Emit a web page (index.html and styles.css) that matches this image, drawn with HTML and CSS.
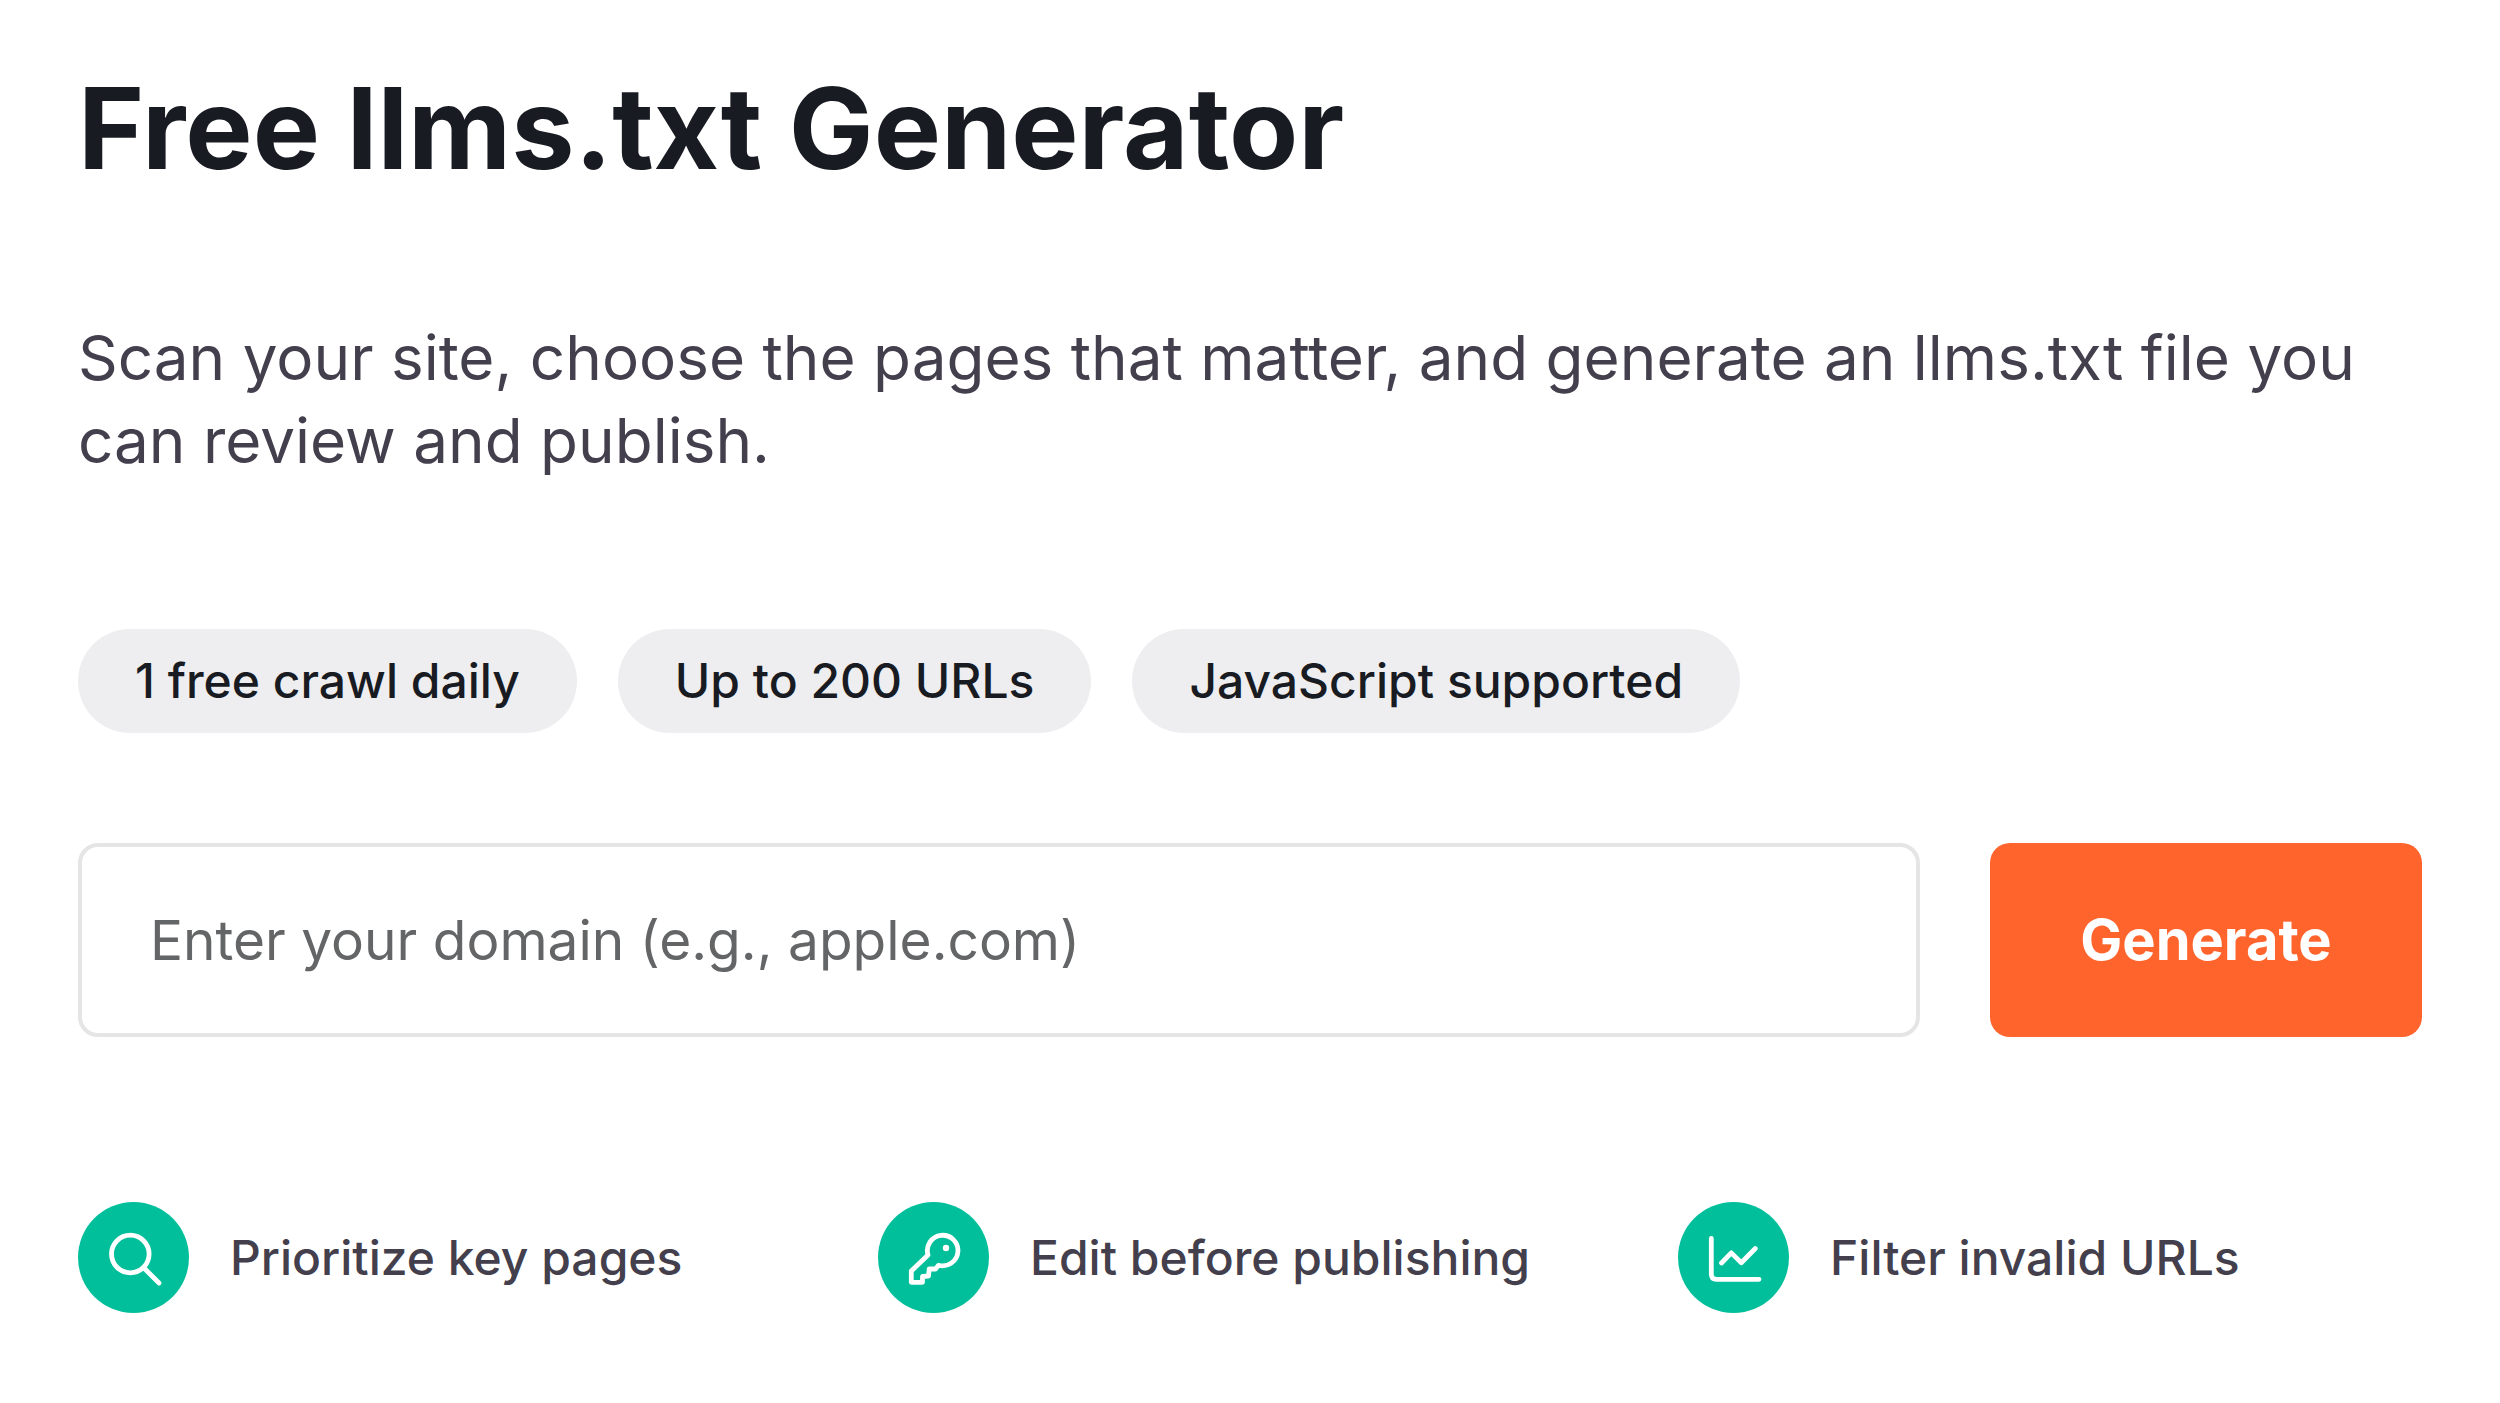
FILE: index.html
```html
<!DOCTYPE html>
<html lang="en">
<head>
<meta charset="utf-8">
<meta name="viewport" content="width=device-width, initial-scale=1">
<title>Free llms.txt Generator</title>
<link rel="stylesheet" href="styles.css">
</head>
<body>
<main class="hero">
  <h1 class="title">Free llms.txt Generator</h1>
  <p class="lead">Scan your site, choose the pages that matter, and generate an llms.txt file you can review and publish.</p>
  <ul class="tags">
    <li class="tag">1 free crawl daily</li>
    <li class="tag">Up to 200 URLs</li>
    <li class="tag">JavaScript supported</li>
  </ul>
  <form class="form">
    <input class="domain" type="text" aria-label="Domain" placeholder="Enter your domain (e.g., apple.com)">
    <button class="submit" type="submit">Generate</button>
  </form>
  <ul class="features">
    <li class="feature">
      <svg class="icon" viewBox="0 0 111 111" aria-hidden="true"><circle class="disc" cx="55.5" cy="55.5" r="55.5"/><circle cx="52.3" cy="52" r="18.8"/><path d="M66.5 66.5 81 81"/></svg>
      <span>Prioritize key pages</span>
    </li>
    <li class="feature">
      <svg class="icon" viewBox="0 0 111 111" aria-hidden="true"><circle class="disc" cx="55.5" cy="55.5" r="55.5"/><path d="M50 53A15.3 15.3 0 1 1 60.5 63.3L57.5 67H51.2L50.5 74 44.5 74.5V80.3H33.3V69Z"/><circle class="dot" cx="68" cy="46" r="3.2"/></svg>
      <span>Edit before publishing</span>
    </li>
    <li class="feature">
      <svg class="icon" viewBox="0 0 111 111" aria-hidden="true"><circle class="disc" cx="55.5" cy="55.5" r="55.5"/><path d="M33.3 36.5V72Q33.3 77.3 38.5 77.3H81M43.5 61 53.3 50.9 63.3 60.7 77.3 46.5"/></svg>
      <span>Filter invalid URLs</span>
    </li>
  </ul>
</main>
</body>
</html>
```
FILE: styles.css
```css
* { box-sizing: border-box; }
body { margin: 0; background: #fff; color: #191b23; font-family: Inter, "Liberation Sans", sans-serif; }
.hero { padding: 61px 78px; }
.title { margin: 0; font-size: 113px; line-height: 134px; font-weight: 700; }
.lead { margin: 121px 0 0; font-size: 62px; line-height: 83px; color: #443f4d; }
.tags, .features { list-style: none; margin: 0; padding: 0; display: flex; }
.tags { margin-top: 147px; gap: 41px; }
.tag { padding: 0 57px; border-radius: 52px; background: #eeeef1; font-size: 48px; line-height: 104px; font-weight: 500; }
.form { display: flex; gap: 70px; margin-top: 110px; }
.domain { flex: 1; min-width: 0; height: 194px; padding: 0 68px; border: 4px solid #e5e5e5; border-radius: 20px; font: inherit; font-size: 55px; }
.domain::placeholder { color: #646566; opacity: 1; }
.submit { width: 432px; border: 0; border-radius: 20px; background: #ff642d; color: #fff; font: inherit; font-size: 56px; font-weight: 700; }
.features { margin-top: 165px; display: grid; grid-template-columns: 1fr 1fr 1fr; gap: 56px; }
.feature { display: flex; align-items: center; gap: 41px; font-size: 48px; font-weight: 500; color: #443f4d; white-space: nowrap; }
.icon { width: 111px; height: 111px; flex: none; fill: none; stroke: #fff; stroke-width: 4.8; stroke-linecap: round; stroke-linejoin: round; }
.disc { fill: #00bf9a; stroke: none; }
.dot { fill: #fff; stroke: none; }
```
